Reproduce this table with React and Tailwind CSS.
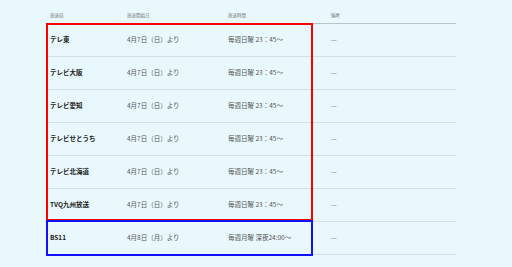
import React from 'react';

const rows = [
  { station: 'テレ東', start: '4月7日（日）より', time: '毎週日曜 23：45〜' },
  { station: 'テレビ大阪', start: '4月7日（日）より', time: '毎週日曜 23：45〜' },
  { station: 'テレビ愛知', start: '4月7日（日）より', time: '毎週日曜 23：45〜' },
  { station: 'テレビせとうち', start: '4月7日（日）より', time: '毎週日曜 23：45〜' },
  { station: 'テレビ北海道', start: '4月7日（日）より', time: '毎週日曜 23：45〜' },
  { station: 'TVQ九州放送', start: '4月7日（日）より', time: '毎週日曜 23：45〜' },
  { station: 'BS11', start: '4月8日（月）より', time: '毎週月曜 深夜24:00〜' },
];

const cols = 'grid grid-cols-[77px_101px_103px_1fr]';

export default function App() {
  return (
    <div
      className="relative w-[512px] h-[267px] overflow-hidden bg-[#e8f8fc] pl-[48px]"
      style={{ fontFamily: '"Noto Sans CJK JP", "Noto Sans", sans-serif' }}
    >
      <div className="w-[408px]">
        {/* header */}
        <div className={`${cols} h-[24px] items-end pb-[4px] border-b border-[#b9c3c6] text-[4.5px] text-[#777] pl-[2px]`}>
          <span>放送局</span>
          <span>放送開始日</span>
          <span>放送時間</span>
          <span>備考</span>
        </div>

        {rows.map((r) => (
          <div
            key={r.station}
            className={`${cols} h-[33px] items-center border-b border-[#d3e1e6] pl-[2px] text-[6.5px]`}
          >
            <span className="font-bold text-[#222]">{r.station}</span>
            <span className="text-[#555]">{r.start}</span>
            <span className="text-[#555]">{r.time}</span>
            <span className="text-[#777]">—</span>
          </div>
        ))}
      </div>

      {/* annotation boxes */}
      <div className="absolute left-[46px] top-[23px] w-[267px] h-[198px] border-2 border-[#ff0000]" />
      <div className="absolute left-[46px] top-[220px] w-[267px] h-[36px] border-2 border-[#1010ff]" />
    </div>
  );
}
